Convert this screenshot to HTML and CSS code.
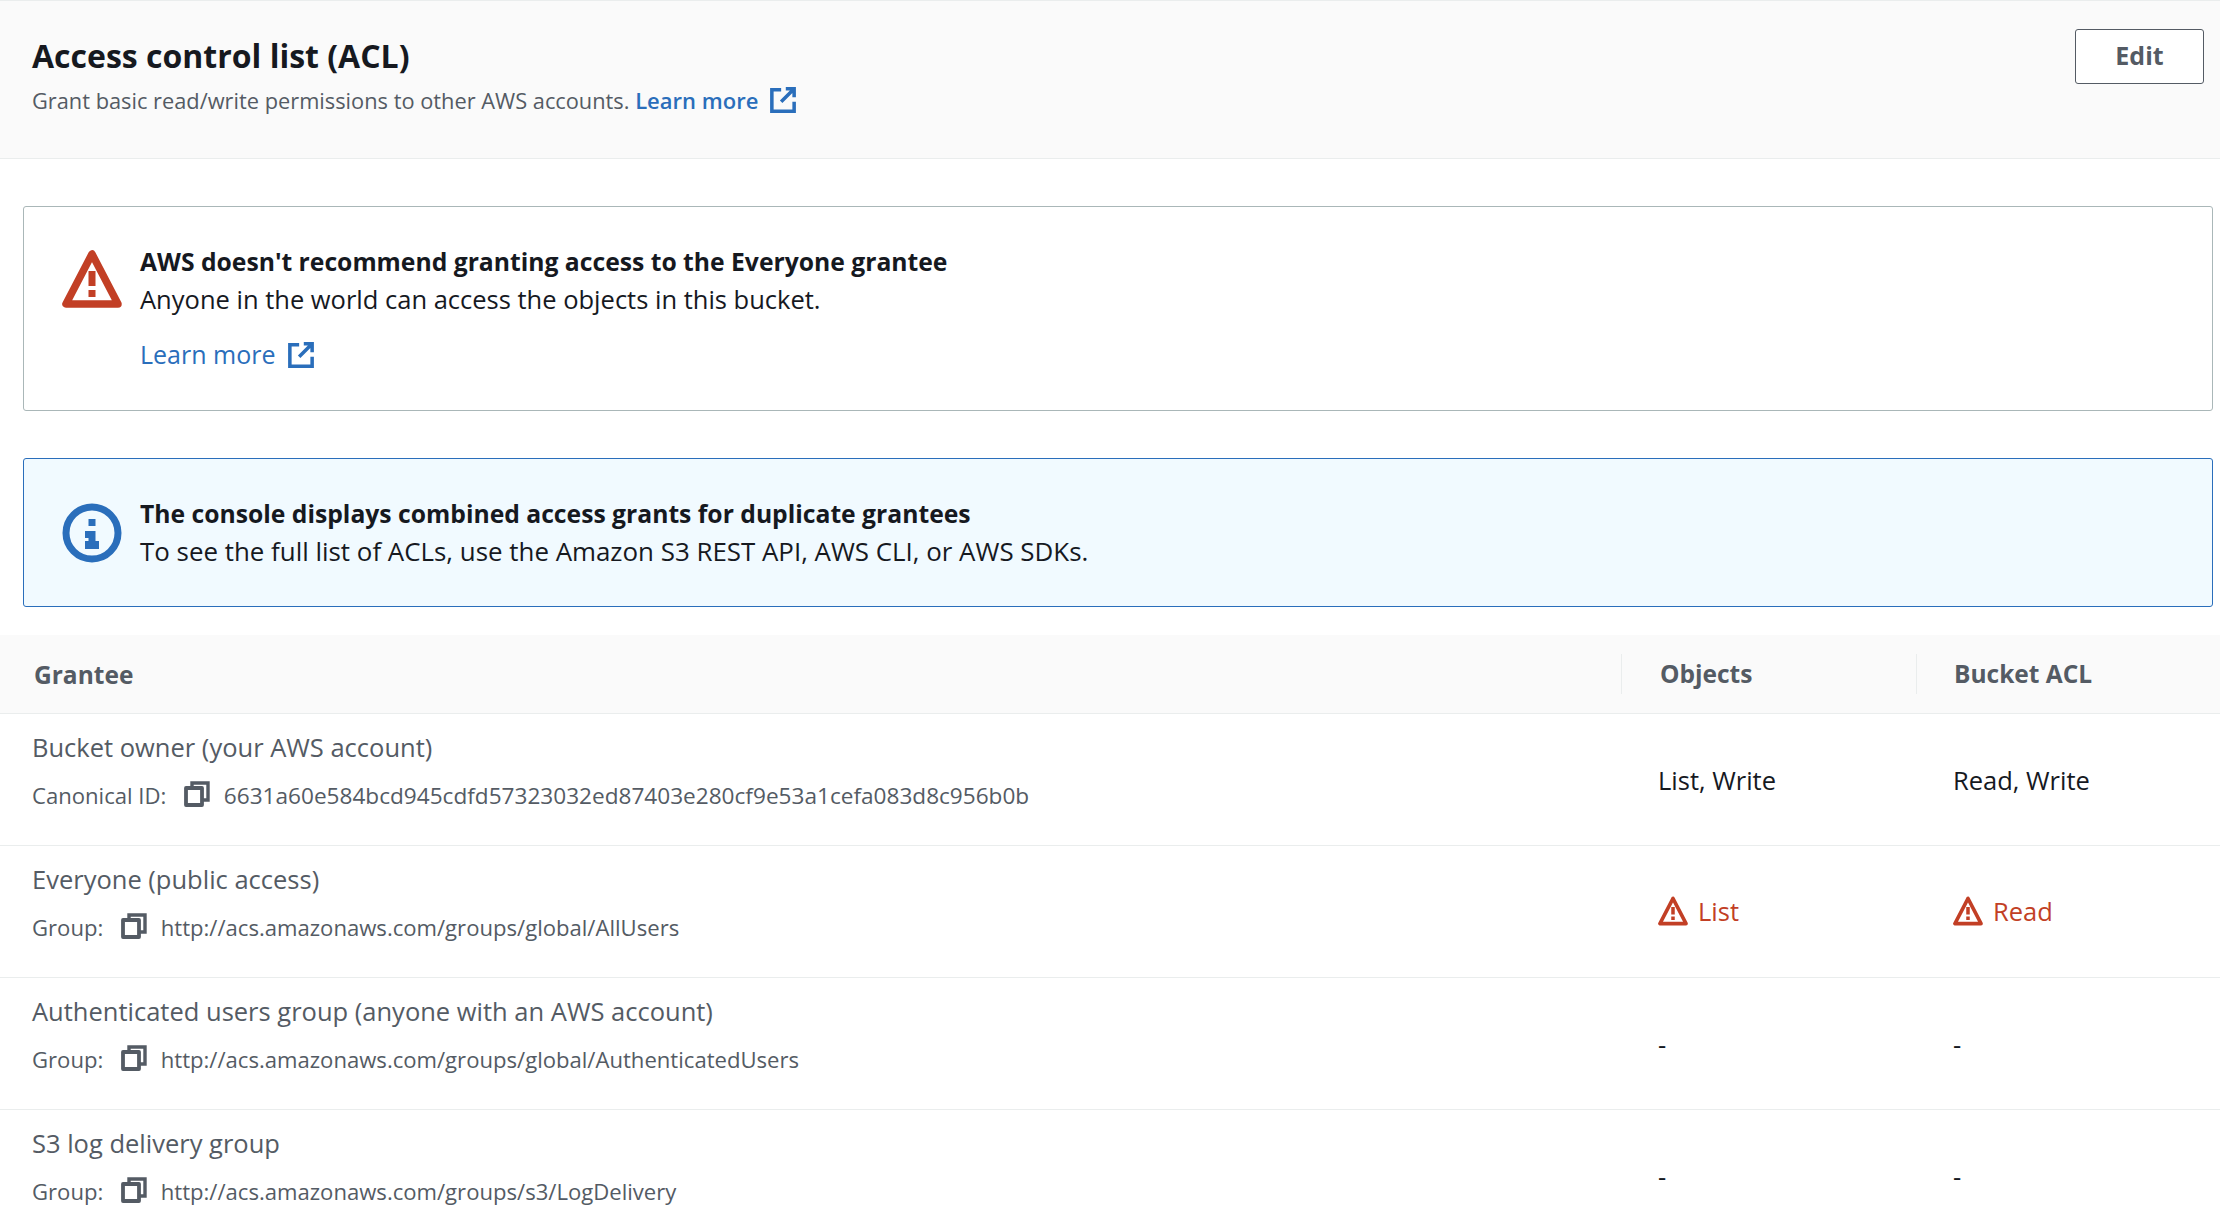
FILE: index.html

```html
<!doctype html>
<html lang="en">
<head>
    <meta charset="utf-8"/>
    <title>Access control list (ACL)</title>
    <link rel="stylesheet" href="styles.css">
</head>
<body>

<svg class="defs" width="0" height="0">
    <symbol id="ext" viewBox="0 0 28 28">
        <path d="M12 3H2v23h24V16M17 2h9v9M26 2 12 16" fill="none" stroke="currentColor" stroke-width="3.8"/>
    </symbol>
    <symbol id="warn" viewBox="0 0 60 60">
        <path d="M30 5 4 55h52z" fill="none" stroke="currentColor" stroke-width="7.5" stroke-linejoin="round"/>
        <path d="M26.500 22h7v15h-7zM26.500 41h7v7h-7z" fill="currentColor"/>
    </symbol>
    <symbol id="info" viewBox="0 0 60 60">
        <circle cx="30" cy="30" r="26" fill="none" stroke="currentColor" stroke-width="7"/>
        <path d="M26.500 16h7v7h-7zM23 28h10.500v10H37v8H23v-8h3.500v-3H23z" fill="currentColor"/>
    </symbol>
    <symbol id="copy" viewBox="0 0 26 26">
        <path d="M8 6V2h16v17h-5" fill="none" stroke="currentColor" stroke-width="3.400"/>
        <path d="M2 7h16v17H2z" fill="none" stroke="currentColor" stroke-width="3.800" stroke-linejoin="round"/>
    </symbol>
</svg>

<!--header-->
<div class="head">
    <div>
        <h2 class="title">Access control list (ACL)</h2>
        <p class="desc">Grant basic read/write permissions to other AWS accounts. <a class="link bold" href="#">Learn more <svg class="ext"><use href="#ext"/></svg></a></p>
    </div>
    <button class="edit">Edit</button>
</div>

<!--alerts-->
<div class="alerts">
    <div class="alert warning">
        <svg class="alert-icon red"><use href="#warn"/></svg>
        <div>
            <div class="alert-title">AWS doesn't recommend granting access to the Everyone grantee</div>
            <div class="alert-text">Anyone in the world can access the objects in this bucket.</div>
            <a class="link more" href="#">Learn more <svg class="ext"><use href="#ext"/></svg></a>
        </div>
    </div>
    <div class="alert notice">
        <svg class="alert-icon blue"><use href="#info"/></svg>
        <div>
            <div class="alert-title">The console displays combined access grants for duplicate grantees</div>
            <div class="alert-text">To see the full list of ACLs, use the Amazon S3 REST API, AWS CLI, or AWS SDKs.</div>
        </div>
    </div>
</div>

<!--table-->
<div class="table">
    <div class="row th">
        <div class="c1">Grantee</div>
        <div class="c2"><span class="sep">Objects</span></div>
        <div class="c3"><span class="sep">Bucket ACL</span></div>
    </div>
    <div class="row">
        <div class="c1">
            <div class="name">Bucket owner (your AWS account)</div>
            <div class="meta">Canonical ID: <svg class="copy"><use href="#copy"/></svg> <span class="hash">6631a60e584bcd945cdfd57323032ed87403e280cf9e53a1cefa083d8c956b0b</span></div>
        </div>
        <div class="c2">List, Write</div>
        <div class="c3">Read, Write</div>
    </div>
    <div class="row">
        <div class="c1">
            <div class="name">Everyone (public access)</div>
            <div class="meta">Group: <svg class="copy"><use href="#copy"/></svg> http://acs.amazonaws.com/groups/global/AllUsers</div>
        </div>
        <div class="c2 danger"><svg class="warn"><use href="#warn"/></svg>List</div>
        <div class="c3 danger"><svg class="warn"><use href="#warn"/></svg>Read</div>
    </div>
    <div class="row">
        <div class="c1">
            <div class="name">Authenticated users group (anyone with an AWS account)</div>
            <div class="meta">Group: <svg class="copy"><use href="#copy"/></svg> http://acs.amazonaws.com/groups/global/AuthenticatedUsers</div>
        </div>
        <div class="c2">-</div>
        <div class="c3">-</div>
    </div>
    <div class="row">
        <div class="c1">
            <div class="name">S3 log delivery group</div>
            <div class="meta">Group: <svg class="copy"><use href="#copy"/></svg> http://acs.amazonaws.com/groups/s3/LogDelivery</div>
        </div>
        <div class="c2">-</div>
        <div class="c3">-</div>
    </div>
</div>

</body>
</html>
```

FILE: styles.css

```css
* {
    padding: 0;
    margin: 0;
    box-sizing: border-box;
}
html, body {
    height: 1226px;
    overflow: hidden;
}
body {
    font-family: "Open Sans", "Noto Sans", sans-serif;
    font-size: 25.5px;
    color: #16191f;
    background: #fff;
}
.defs {
    position: absolute;
}
.head {
    height: 159px;
    padding: 28px 16px 0 32px;
    display: flex;
    justify-content: space-between;
    align-items: flex-start;
    background: #fafafa;
    border-top: 1px solid #eaeded;
    border-bottom: 1px solid #eaeded;
}
.title {
    font-size: 32px;
    line-height: 54px;
    font-weight: 700;
}
.desc {
    font-size: 21.8px;
    line-height: 30px;
    color: #545b64;
    margin-top: 2px;
}
.link {
    color: #2a6ebb;
    text-decoration: none;
}
.bold {
    font-size: 22px;
    font-weight: 600;
}
.ext {
    width: 26px;
    height: 28px;
    margin-left: 6px;
    vertical-align: -5px;
}
.edit {
    width: 129px;
    height: 55px;
    padding-bottom: 3px;
    font-family: inherit;
    font-size: 25px;
    font-weight: 700;
    color: #545b64;
    background: #fff;
    border: 1.500px solid #545b64;
    border-radius: 3px;
}
.alerts {
    padding: 47px 7px 0 23px;
    display: flex;
    flex-direction: column;
    gap: 47px;
}
.alert {
    display: flex;
    gap: 18px;
    padding: 36px 38px 0;
    border-radius: 3px;
}
.warning {
    height: 205px;
    border: 1.500px solid #aab7b8;
}
.notice {
    height: 149px;
    background: #f1faff;
    border: 1.500px solid #2a6ebb;
}
.notice .alert-text {
    font-size: 25.9px;
}
.alert-icon {
    width: 60px;
    height: 60px;
    margin-top: 6px;
    flex: none;
}
.notice .alert-icon {
    margin-top: 8px;
}
.red {
    color: #c23f25;
}
.blue {
    color: #2a6ebb;
}
.alert-title {
    font-size: 24.7px;
    line-height: 38px;
    font-weight: 700;
}
.alert-text {
    line-height: 36px;
}
.more {
    display: block;
    margin-top: 19px;
    line-height: 36px;
    font-size: 25px;
}
.table {
    margin-top: 28px;
}
.row {
    height: 132px;
    display: flex;
    align-items: center;
    border-bottom: 1.500px solid #eaeded;
}
.c1 {
    flex: 1;
    padding-left: 32px;
}
.row:not(.th) .c1 {
    padding-bottom: 21px;
}
.th + .row .c1 {
    padding-bottom: 19px;
}
.c2 {
    width: 295px;
    padding-left: 37px;
}
.c3 {
    width: 304px;
    padding-left: 37px;
}
.th {
    height: 79px;
    background: #fafafa;
    font-size: 24.5px;
    font-weight: 700;
    color: #545b64;
}
.th .c1 {
    padding-left: 34px;
}
.th .c2, .th .c3 {
    padding-left: 0;
}
.sep {
    display: block;
    padding-left: 38px;
    line-height: 40px;
    border-left: 1px solid #eaeded;
}
.c3 .sep {
    padding-left: 37px;
}
.name {
    color: #545b64;
    line-height: 36px;
}
.meta {
    font-size: 22.1px;
    color: #545b64;
    line-height: 30px;
    margin-top: 15px;
}
.hash {
    font-size: 22.6px;
}
.copy {
    width: 26px;
    height: 26px;
    margin: 0 8px 0 12px;
    vertical-align: -3px;
}
.danger {
    color: #c23f25;
    display: flex;
    align-items: center;
    gap: 10px;
    padding-bottom: 2px;
}
.warn {
    width: 30px;
    height: 30px;
}
```
